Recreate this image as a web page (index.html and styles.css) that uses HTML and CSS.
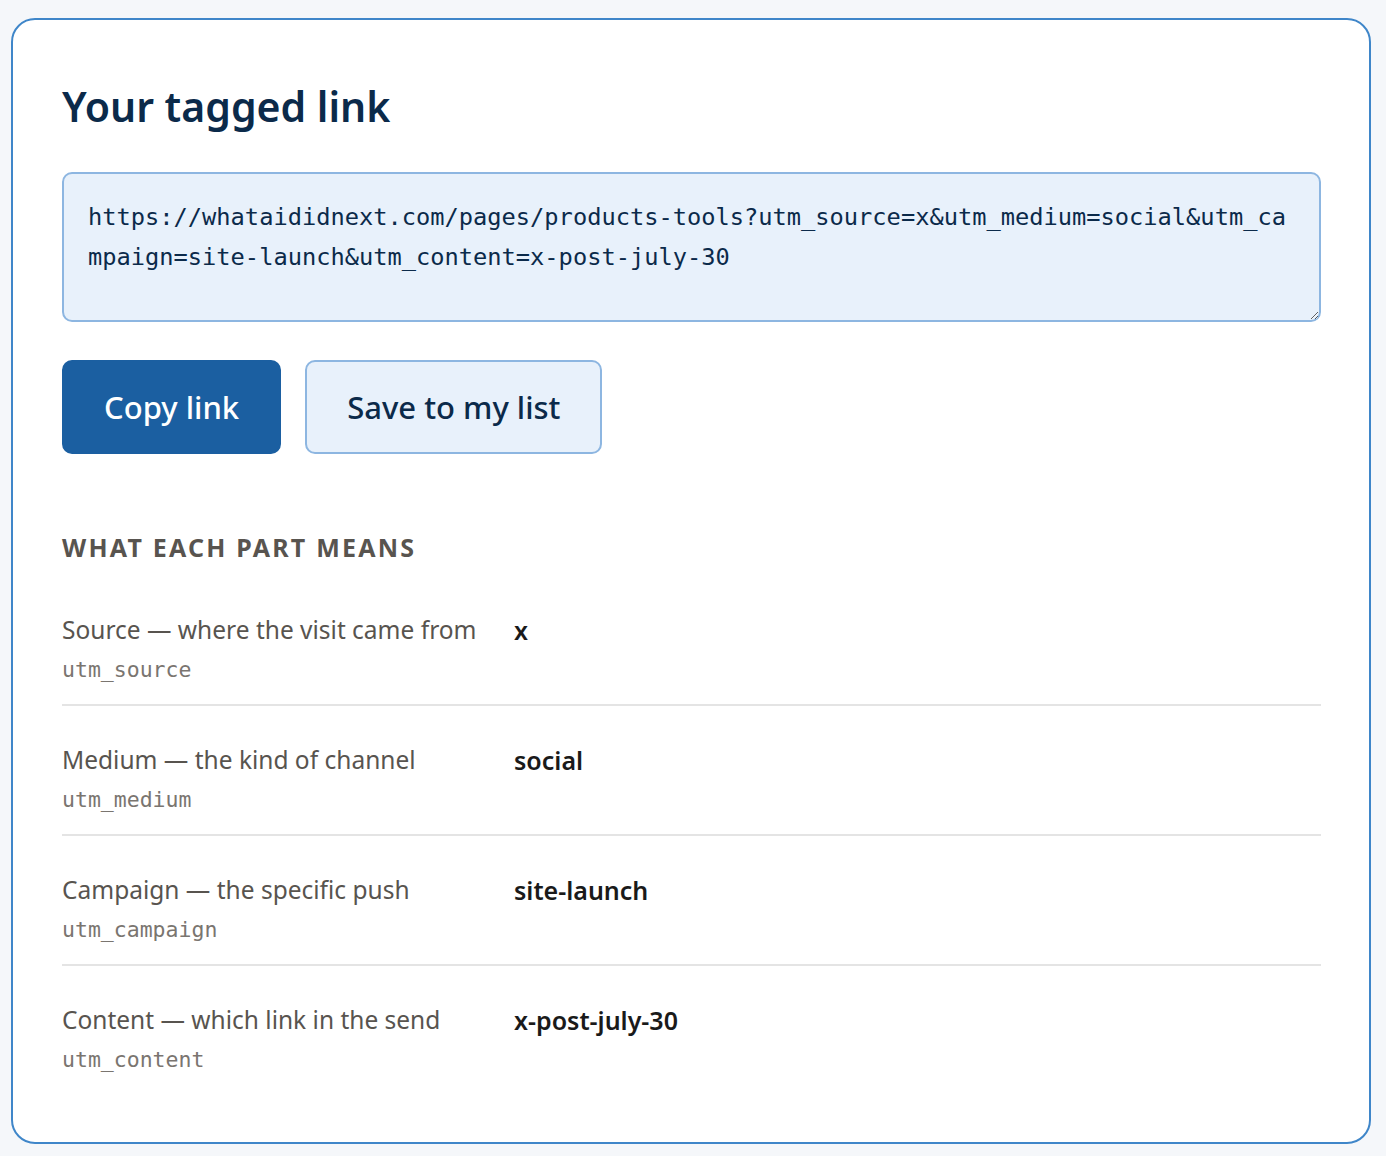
FILE: index.html
```html
<!DOCTYPE html>
<html lang="en">
<head>
<meta charset="utf-8">
<title>Your tagged link</title>
<link rel="stylesheet" href="styles.css">
</head>
<body>
<section class="card">
  <h1 class="title">Your tagged link</h1>
  <textarea class="link-box" readonly spellcheck="false">https://whataididnext.com/pages/products-tools?utm_source=x&amp;utm_medium=social&amp;utm_campaign=site-launch&amp;utm_content=x-post-july-30</textarea>
  <div class="actions">
    <button class="btn btn-primary" type="button">Copy link</button>
    <button class="btn btn-secondary" type="button">Save to my list</button>
  </div>
  <h2 class="section-title">WHAT EACH PART MEANS</h2>
  <dl class="parts">
    <div class="part">
      <dt class="part-label">Source — where the visit came from<code class="part-key">utm_source</code></dt>
      <dd class="part-value">x</dd>
    </div>
    <div class="part">
      <dt class="part-label">Medium — the kind of channel<code class="part-key">utm_medium</code></dt>
      <dd class="part-value">social</dd>
    </div>
    <div class="part">
      <dt class="part-label">Campaign — the specific push<code class="part-key">utm_campaign</code></dt>
      <dd class="part-value">site-launch</dd>
    </div>
    <div class="part">
      <dt class="part-label">Content — which link in the send<code class="part-key">utm_content</code></dt>
      <dd class="part-value">x-post-july-30</dd>
    </div>
  </dl>
</section>
</body>
</html>
```
FILE: styles.css
```css
* { box-sizing: border-box; }

html, body {
  margin: 0;
  background: #f5f7fa;
}

body {
  padding: 18px 15px 12px 11px;
  font-family: "Noto Sans", "Open Sans", sans-serif;
  color: #1a1a1a;
}

.card {
  background: #ffffff;
  border: 2px solid #3f86c9;
  border-radius: 24px;
  padding: 56px 48px 48px 49px;
}

.title {
  margin: 0 0 36px;
  font-size: 41px;
  line-height: 60px;
  font-weight: 600;
  color: #0b2a4a;
}

.link-box {
  display: block;
  width: 100%;
  height: 150px;
  margin: 0;
  padding: 23px 24px;
  border: 2px solid #8db6e1;
  border-radius: 10px;
  background: #e8f1fb;
  color: #0b2a4a;
  font-family: "DejaVu Sans Mono", "Liberation Mono", monospace;
  font-size: 23.7px;
  line-height: 40px;
  word-break: break-all;
  resize: vertical;
  outline: none;
}

.actions {
  display: flex;
  gap: 24px;
  margin-top: 38px;
}

.btn {
  height: 94px;
  padding: 0 40px;
  border-radius: 10px;
  font-family: inherit;
  font-size: 31px;
  font-weight: 500;
  cursor: pointer;
}

.btn-primary {
  background: #1b5fa1;
  border: 2px solid #1b5fa1;
  color: #ffffff;
}

.btn-secondary {
  background: #e8f1fb;
  border: 2px solid #8db6e1;
  color: #0b2a4a;
}

.section-title {
  margin: 77px 0 51px;
  font-size: 25px;
  line-height: 32px;
  font-weight: 700;
  letter-spacing: 2.2px;
  color: #58544f;
}

.parts {
  margin: 0;
}

.part {
  display: grid;
  grid-template-columns: 428px 1fr;
  column-gap: 24px;
  padding: 38px 0 19px;
  border-bottom: 2px solid #e4e4e4;
}

.part:first-child {
  padding-top: 0;
}

.part:last-child {
  border-bottom: none;
}

.part-label {
  margin: 0;
  font-size: 24.5px;
  line-height: 32px;
  color: #58544f;
}

.part-key {
  display: block;
  margin-top: 9px;
  font-family: "DejaVu Sans Mono", "Liberation Mono", monospace;
  font-size: 21.5px;
  line-height: 30px;
  color: #7a7570;
}

.part-value {
  margin: 0;
  font-size: 25px;
  line-height: 32px;
  font-weight: 600;
  color: #1a1a1a;
}
```
